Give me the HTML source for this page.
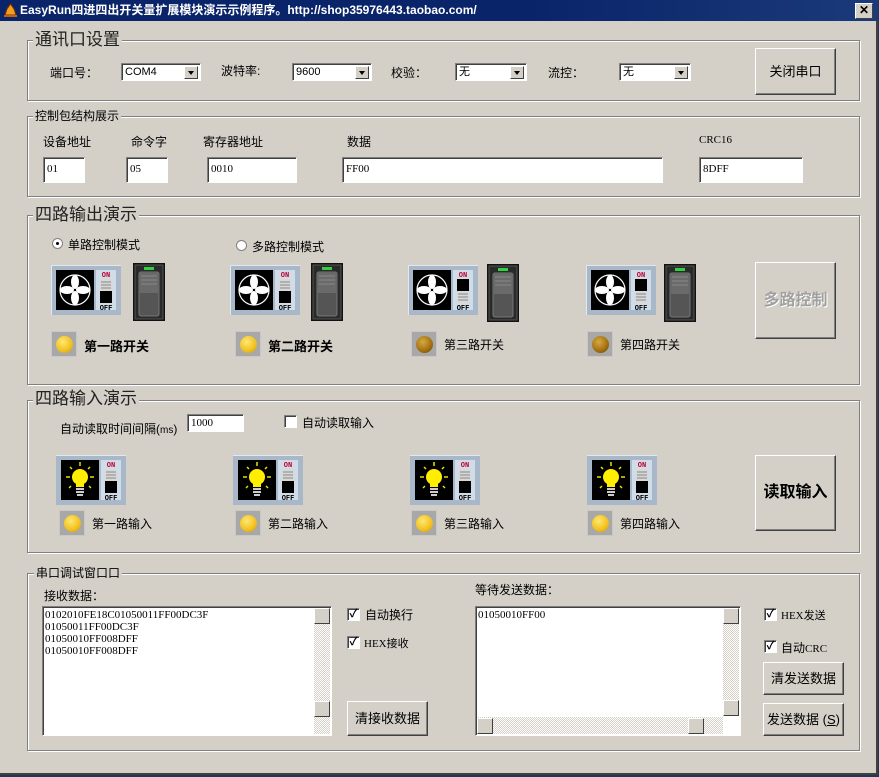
<!DOCTYPE html>
<html><head><meta charset="utf-8">
<style>
*{box-sizing:border-box;margin:0;padding:0}
body{width:879px;height:777px;background:#1e3a5a;position:relative;overflow:hidden;font-family:"Liberation Sans","Noto Sans CJK SC",sans-serif;font-size:12px;color:#000}
.a{position:absolute}
#win{left:0;top:0;width:878px;height:775px;background:#d4d0c8;border-right:2px solid #404040;border-bottom:2px solid #404040}
#title{left:0;top:0;width:878px;height:21px;background:linear-gradient(90deg,#0a246a,#0a246a 60%,#1a3a7a);color:#fff;font-weight:bold;font-size:12px;line-height:21px;padding-left:20px;white-space:nowrap}
.close{left:855px;top:3px;width:18px;height:16px;background:#d4d0c8;border:1px solid;border-color:#fff #404040 #404040 #fff;font:bold 12px "Liberation Sans";line-height:13px;text-align:center;color:#000}
.grp{border:1px solid #808080;box-shadow:inset 1px 1px 0 #fff,1px 1px 0 #fff}
.gt{background:#d4d0c8;padding:0 2px;white-space:nowrap}
.big{font-size:17px;line-height:20px;color:#222}
.sm{font-size:12px;line-height:14px}
.inp{background:#fff;border:1px solid;border-color:#808080 #fff #fff #808080;box-shadow:inset 1px 1px 0 #404040;font-family:"Liberation Serif",serif;font-size:11px;padding:5px 3px;line-height:12px}
.cmb{background:#fff;border:1px solid;border-color:#808080 #fff #fff #808080;box-shadow:inset 1px 1px 0 #404040;height:18px;font-size:11px;padding:2px 3px;line-height:13px}
.cmb i{position:absolute;right:2px;top:2px;width:14px;height:13px;background:#d4d0c8;border:1px solid;border-color:#fff #404040 #404040 #fff}
.cmb i:after{content:"";position:absolute;left:3px;top:4px;border:3px solid transparent;border-top:4px solid #000}
.btn{background:#d4d0c8;border:1px solid;border-color:#fff #404040 #404040 #fff;box-shadow:inset -1px -1px 0 #808080;text-align:center;font-size:13px}
.led{width:26px;height:26px;background:#a8a8a8;border:1px solid #c8c8c8}
.led b{position:absolute;left:4px;top:4px;width:17px;height:17px;border-radius:50%;background:radial-gradient(circle at 40% 35%,#ffe870,#f0c020 60%,#c89000)}
.led.off b{background:radial-gradient(circle at 40% 35%,#d8a840,#a07010 60%,#604000)}
.chk{width:13px;height:13px;background:#fff;border:1px solid;border-color:#808080 #fff #fff #808080;box-shadow:inset 1px 1px 0 #404040;font-size:11px;line-height:10px;text-align:center;font-weight:bold}
.sb{background:repeating-conic-gradient(#d4d0c8 0 25%,#fff 0 50%) 0 0/2px 2px}
.sbb{width:16px;height:16px;background:#d4d0c8;border:1px solid;border-color:#fff #404040 #404040 #fff}
.mono{font-family:"Liberation Serif",serif;font-size:11px;line-height:12px}
</style></head><body>
<svg width="0" height="0" style="position:absolute">
<defs>
<symbol id="fan" viewBox="0 0 70 50">
<rect x="0" y="0" width="70" height="50" fill="#a8b8c8"/><rect x="0" y="0" width="70" height="1" fill="#e0e8f0"/><rect x="0" y="0" width="1" height="50" fill="#e0e8f0"/>
<rect x="5" y="5" width="38" height="40" fill="#000"/>
<circle cx="24" cy="25" r="15" fill="none" stroke="#fff" stroke-width="1.2"/>
<g fill="#fff"><ellipse cx="24" cy="17" rx="4" ry="7"/><ellipse cx="24" cy="33" rx="4" ry="7"/><ellipse cx="16" cy="25" rx="7" ry="4"/><ellipse cx="32" cy="25" rx="7" ry="4"/></g>
<rect x="45" y="5" width="20" height="40" fill="#d0dce8"/>
<text x="55" y="12" font-size="7" fill="#c00030" text-anchor="middle" font-family="Liberation Mono" font-weight="bold">ON</text>
<text x="55" y="45" font-size="7" fill="#000" text-anchor="middle" font-family="Liberation Mono" font-weight="bold">OFF</text>
<rect x="49" y="14" width="12" height="24" fill="#000"/>
</symbol>
<symbol id="bulb" viewBox="0 0 70 50">
<rect x="0" y="0" width="70" height="50" fill="#a8b8c8"/><rect x="0" y="0" width="70" height="1" fill="#e0e8f0"/>
<rect x="5" y="5" width="38" height="40" fill="#000"/>
<g stroke="#e8e000" stroke-width="1.5"><line x1="24" y1="7" x2="24" y2="11"/><line x1="10" y1="22" x2="14" y2="22"/><line x1="34" y1="22" x2="38" y2="22"/><line x1="14" y1="12" x2="16" y2="14"/><line x1="34" y1="12" x2="32" y2="14"/><line x1="13" y1="33" x2="15" y2="31"/><line x1="35" y1="33" x2="33" y2="31"/></g>
<circle cx="24" cy="22" r="8" fill="#ffee00"/><rect x="20" y="27" width="8" height="5" fill="#ffee00"/>
<g fill="#ccc"><rect x="20" y="33" width="8" height="2"/><rect x="20" y="36" width="8" height="2"/><rect x="21" y="39" width="6" height="2"/></g>
<rect x="45" y="5" width="20" height="40" fill="#d0dce8"/>
<text x="55" y="12" font-size="7" fill="#c00030" text-anchor="middle" font-family="Liberation Mono" font-weight="bold">ON</text>
<text x="55" y="45" font-size="7" fill="#000" text-anchor="middle" font-family="Liberation Mono" font-weight="bold">OFF</text>
<rect x="49" y="14" width="12" height="24" fill="#000"/>
</symbol>
<symbol id="upk" viewBox="0 0 12 24"><rect x="0" y="0" width="12" height="12" fill="#d8d8d8"/><g stroke="#888"><line x1="1" y1="3" x2="11" y2="3"/><line x1="1" y1="6" x2="11" y2="6"/><line x1="1" y1="9" x2="11" y2="9"/></g></symbol>
<symbol id="dnk" viewBox="0 0 12 24"><rect x="0" y="12" width="12" height="12" fill="#d8d8d8"/><g stroke="#888"><line x1="1" y1="15" x2="11" y2="15"/><line x1="1" y1="18" x2="11" y2="18"/><line x1="1" y1="21" x2="11" y2="21"/></g></symbol>
<symbol id="rock" viewBox="0 0 32 58">
<rect x="0" y="0" width="32" height="58" fill="#111"/><rect x="2" y="2" width="28" height="54" fill="#2a2a2a" stroke="#555"/>
<rect x="11" y="4" width="10" height="3" fill="#30d040"/>
<rect x="6" y="9" width="20" height="44" rx="2" fill="#555" stroke="#777"/>
<rect x="7" y="10" width="18" height="20" fill="#6a6a6a"/>
<g stroke="#888"><line x1="8" y1="13" x2="24" y2="13"/><line x1="8" y1="17" x2="24" y2="17"/><line x1="8" y1="21" x2="24" y2="21"/></g>
</symbol>
</defs></svg>

<div id="win" class="a">
<div id="title" class="a">EasyRun四进四出开关量扩展模块演示示例程序。http://shop35976443.taobao.com/</div>
<svg class="a" style="left:3px;top:3px" width="15" height="15"><path d="M7.5 1 L11 6 L13 12 L2 12 L4 6Z" fill="#f0a020" stroke="#803000"/><rect x="1" y="12" width="13" height="2" fill="#c06010"/></svg>
<div class="a close">✕</div>

<!-- group 1 -->
<div class="a grp" style="left:27px;top:40px;width:833px;height:61px"></div>
<div class="a gt big" style="left:33px;top:30px">通讯口设置</div>
<div class="a" style="left:50px;top:64px">端口号：</div>
<div class="a cmb" style="left:121px;top:63px;width:80px">COM4<i></i></div>
<div class="a" style="left:221px;top:62px">波特率:</div>
<div class="a cmb" style="left:292px;top:63px;width:80px">9600<i></i></div>
<div class="a" style="left:391px;top:64px">校验：</div>
<div class="a cmb" style="left:455px;top:63px;width:72px">无<i></i></div>
<div class="a" style="left:548px;top:64px">流控：</div>
<div class="a cmb" style="left:619px;top:63px;width:72px">无<i></i></div>
<div class="a btn" style="left:755px;top:48px;width:81px;height:47px;line-height:45px">关闭串口</div>

<!-- group 2 -->
<div class="a grp" style="left:27px;top:116px;width:833px;height:81px"></div>
<div class="a gt sm" style="left:33px;top:109px">控制包结构展示</div>
<div class="a" style="left:43px;top:133px">设备地址</div>
<div class="a" style="left:131px;top:133px">命令字</div>
<div class="a" style="left:203px;top:133px">寄存器地址</div>
<div class="a" style="left:347px;top:133px">数据</div>
<div class="a" style="left:699px;top:134px;font-family:'Liberation Serif';font-size:11px">CRC16</div>
<div class="a inp" style="left:43px;top:157px;width:42px;height:26px">01</div>
<div class="a inp" style="left:126px;top:157px;width:42px;height:26px">05</div>
<div class="a inp" style="left:207px;top:157px;width:90px;height:26px">0010</div>
<div class="a inp" style="left:342px;top:157px;width:321px;height:26px">FF00</div>
<div class="a inp" style="left:699px;top:157px;width:104px;height:26px">8DFF</div>

<!-- group 3 -->
<div class="a grp" style="left:27px;top:215px;width:833px;height:170px"></div>
<div class="a gt big" style="left:33px;top:205px">四路输出演示</div>
<div class="a" style="left:52px;top:238px;width:11px;height:11px;border-radius:50%;background:#fff;border:1px solid #808080"><div class="a" style="left:3px;top:3px;width:3px;height:3px;background:#000;border-radius:50%"></div></div>
<div class="a" style="left:68px;top:236px">单路控制模式</div>
<div class="a" style="left:236px;top:240px;width:11px;height:11px;border-radius:50%;background:#fff;border:1px solid #808080"></div>
<div class="a" style="left:252px;top:238px">多路控制模式</div>

<svg class="a" style="left:51px;top:265px" width="70" height="50"><use href="#fan"/><svg x="49" y="14" width="12" height="24"><use href="#upk"/></svg></svg>
<svg class="a" style="left:133px;top:263px" width="32" height="58"><use href="#rock"/></svg>
<svg class="a" style="left:230px;top:265px" width="70" height="50"><use href="#fan"/><svg x="49" y="14" width="12" height="24"><use href="#upk"/></svg></svg>
<svg class="a" style="left:311px;top:263px" width="32" height="58"><use href="#rock"/></svg>
<svg class="a" style="left:408px;top:265px" width="70" height="50"><use href="#fan"/><svg x="49" y="14" width="12" height="24"><use href="#dnk"/></svg></svg>
<svg class="a" style="left:487px;top:264px" width="32" height="58"><use href="#rock"/></svg>
<svg class="a" style="left:586px;top:265px" width="70" height="50"><use href="#fan"/><svg x="49" y="14" width="12" height="24"><use href="#dnk"/></svg></svg>
<svg class="a" style="left:664px;top:264px" width="32" height="58"><use href="#rock"/></svg>

<div class="a led" style="left:51px;top:331px"><b></b></div>
<div class="a" style="left:84px;top:336px;font-weight:bold;font-size:13px">第一路开关</div>
<div class="a led" style="left:235px;top:331px"><b></b></div>
<div class="a" style="left:268px;top:336px;font-weight:bold;font-size:13px">第二路开关</div>
<div class="a led off" style="left:411px;top:331px"><b></b></div>
<div class="a" style="left:444px;top:336px">第三路开关</div>
<div class="a led off" style="left:587px;top:331px"><b></b></div>
<div class="a" style="left:620px;top:336px">第四路开关</div>
<div class="a btn" style="left:755px;top:262px;width:81px;height:77px;line-height:75px;color:#a0a0a0;font-weight:bold;font-size:16px;text-shadow:1px 1px 0 #fff">多路控制</div>

<!-- group 4 -->
<div class="a grp" style="left:27px;top:400px;width:833px;height:153px"></div>
<div class="a gt big" style="left:33px;top:389px">四路输入演示</div>
<div class="a" style="left:60px;top:420px">自动读取时间间隔(<span style="font-size:10px">ms</span>)</div>
<div class="a inp" style="left:187px;top:414px;width:57px;height:18px;padding:2px 3px">1000</div>
<div class="a chk" style="left:284px;top:415px"></div>
<div class="a" style="left:302px;top:414px">自动读取输入</div>
<svg class="a" style="left:56px;top:455px" width="70" height="50"><use href="#bulb"/><svg x="49" y="14" width="12" height="24"><use href="#upk"/></svg></svg>
<svg class="a" style="left:233px;top:455px" width="70" height="50"><use href="#bulb"/><svg x="49" y="14" width="12" height="24"><use href="#upk"/></svg></svg>
<svg class="a" style="left:410px;top:455px" width="70" height="50"><use href="#bulb"/><svg x="49" y="14" width="12" height="24"><use href="#upk"/></svg></svg>
<svg class="a" style="left:587px;top:455px" width="70" height="50"><use href="#bulb"/><svg x="49" y="14" width="12" height="24"><use href="#upk"/></svg></svg>
<div class="a led" style="left:59px;top:510px"><b></b></div>
<div class="a" style="left:92px;top:515px">第一路输入</div>
<div class="a led" style="left:235px;top:510px"><b></b></div>
<div class="a" style="left:268px;top:515px">第二路输入</div>
<div class="a led" style="left:411px;top:510px"><b></b></div>
<div class="a" style="left:444px;top:515px">第三路输入</div>
<div class="a led" style="left:587px;top:510px"><b></b></div>
<div class="a" style="left:620px;top:515px">第四路输入</div>
<div class="a btn" style="left:755px;top:455px;width:81px;height:76px;line-height:74px;font-weight:bold;font-size:16px">读取输入</div>

<!-- group 5 -->
<div class="a grp" style="left:27px;top:573px;width:833px;height:178px"></div>
<div class="a gt sm" style="left:34px;top:566px">串口调试窗口口</div>
<div class="a" style="left:44px;top:587px">接收数据：</div>
<div class="a inp" style="left:42px;top:606px;width:290px;height:130px;padding:2px 2px"><div class="mono">0102010FE18C01050011FF00DC3F<br>01050011FF00DC3F<br>01050010FF008DFF<br>01050010FF008DFF</div></div>
<div class="a sb" style="left:314px;top:608px;width:16px;height:126px"></div>
<div class="a sbb" style="left:314px;top:608px"></div>
<div class="a sbb" style="left:314px;top:701px"></div>
<div class="a chk" style="left:347px;top:608px">✓</div><div class="a" style="left:365px;top:606px">自动换行</div>
<div class="a chk" style="left:347px;top:636px">✓</div><div class="a" style="left:364px;top:635px;font-family:'Liberation Serif','Noto Sans CJK SC';font-size:11px">HEX接收</div>
<div class="a btn" style="left:347px;top:701px;width:81px;height:35px;line-height:33px">清接收数据</div>

<div class="a" style="left:475px;top:581px">等待发送数据：</div>
<div class="a inp" style="left:475px;top:606px;width:266px;height:130px;padding:2px 2px"><div class="mono">01050010FF00</div></div>
<div class="a sb" style="left:723px;top:608px;width:16px;height:108px"></div>
<div class="a sbb" style="left:723px;top:608px"></div>
<div class="a sbb" style="left:723px;top:700px"></div>
<div class="a sb" style="left:477px;top:717px;width:246px;height:17px"></div>
<div class="a sbb" style="left:477px;top:718px"></div>
<div class="a sbb" style="left:688px;top:718px"></div>
<div class="a chk" style="left:764px;top:608px">✓</div><div class="a" style="left:781px;top:607px;font-family:'Liberation Serif','Noto Sans CJK SC';font-size:11px">HEX发送</div>
<div class="a chk" style="left:764px;top:640px">✓</div><div class="a" style="left:781px;top:639px">自动<span style="font-family:'Liberation Serif';font-size:11px">CRC</span></div>
<div class="a btn" style="left:763px;top:662px;width:81px;height:33px;line-height:31px">清发送数据</div>
<div class="a btn" style="left:763px;top:703px;width:81px;height:33px;line-height:31px">发送数据 (<u>S</u>)</div>
</div>
</body></html>
